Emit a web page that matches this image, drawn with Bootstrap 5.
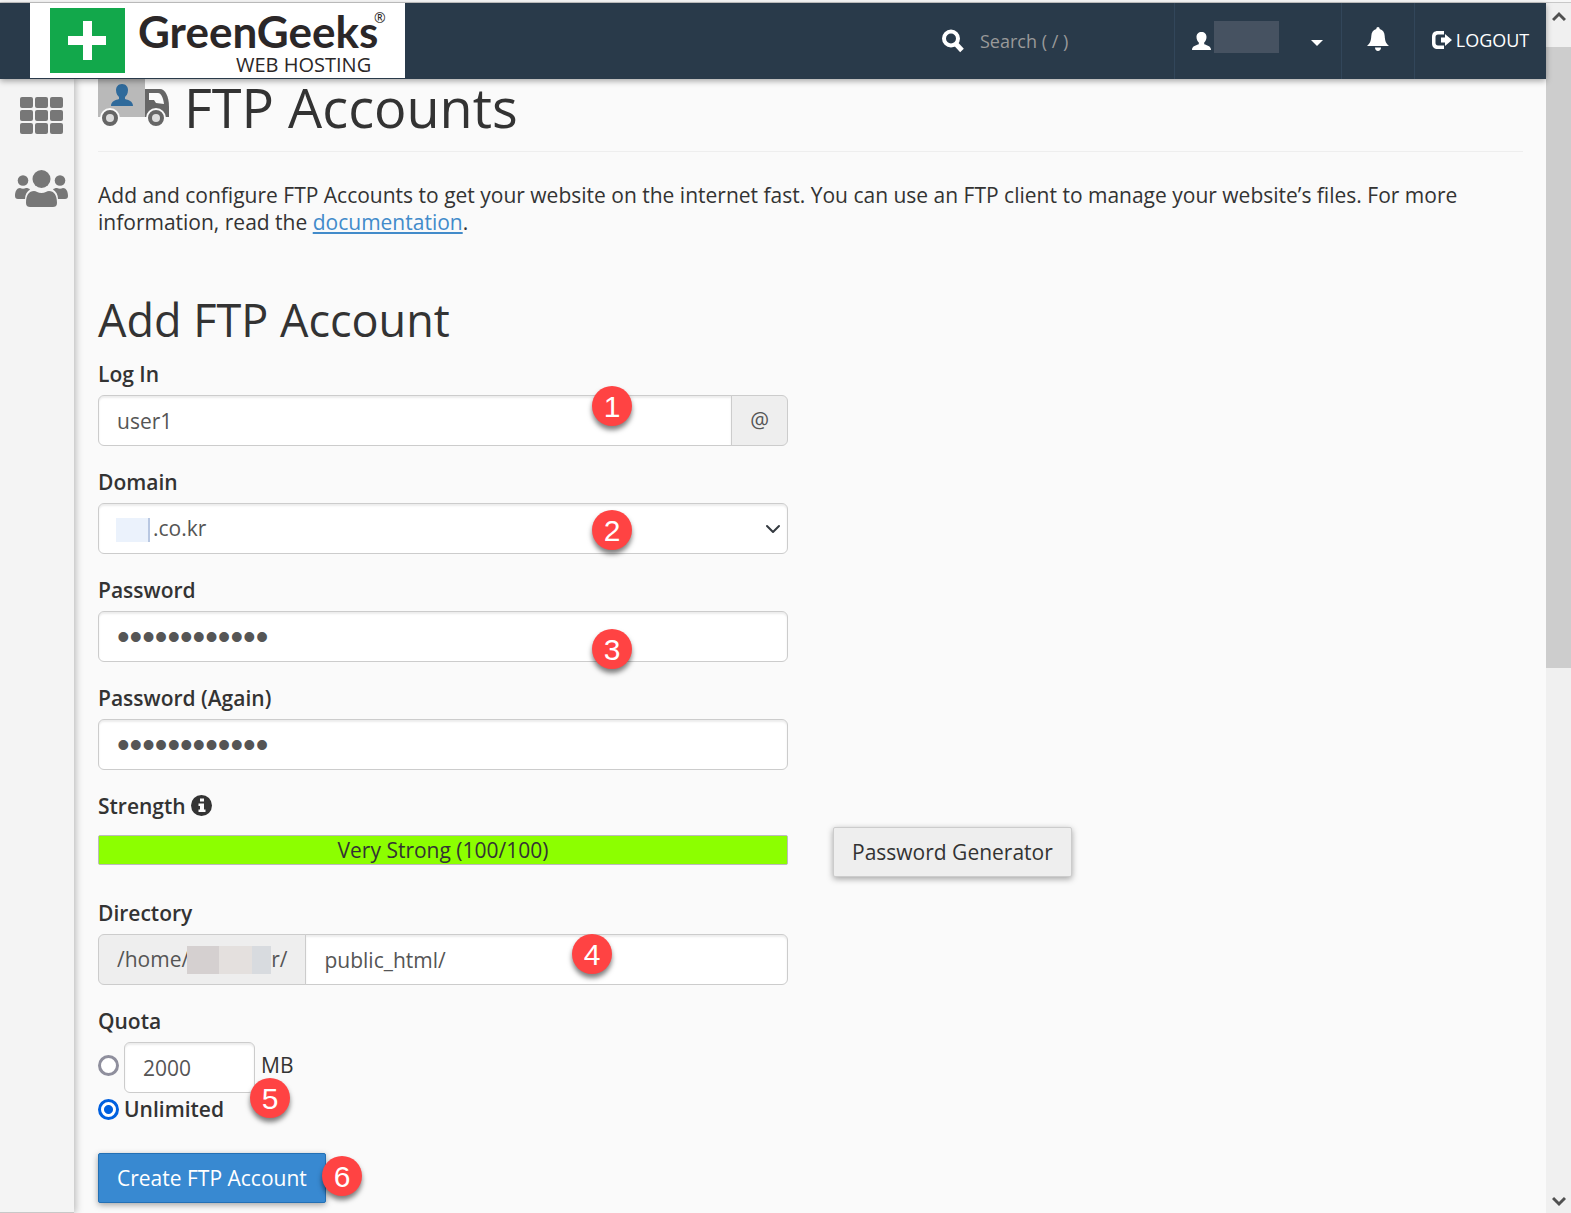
<!DOCTYPE html>
<html lang="en">
<head>
<meta charset="utf-8">
<meta name="viewport" content="width=device-width, initial-scale=1">
<title>FTP Accounts</title>
<link href="https://cdn.jsdelivr.net/npm/bootstrap@5.3.0/dist/css/bootstrap.min.css" rel="stylesheet">
<style>
body { font-family: "Open Sans", "Noto Sans", sans-serif; font-size: 21px; line-height: 27px; color: #333; background: #fafafa; }
.topline { height: 3px; border-bottom: 1px solid #c8c8c8; background: #f7f7f7; }
.app-bar { height: 76px; padding: 0; background: #293a4a; color: #fff; box-shadow: 0 2px 6px rgba(0,0,0,.35); z-index: 5; flex-wrap: nowrap; }
.app-logo { width: 375px; height: 75px; margin-left: 30px; background: #fff; align-self: flex-start; color: #2b2728; }
.app-logo svg { display: block; }
.bar-search { width: 232px; }
.bar-search input { font-size: 18px; line-height: 26px; width: 150px; background: none; border: 0; padding: 0; color: #fff; }
.bar-search input::placeholder { color: #999; opacity: 1; }
.bar-item { height: 76px; border: 0; border-left: 1px solid #32465a; background: none; color: #fff; text-decoration: none; padding: 0; }
.bar-user { width: 167px; padding-left: 17px; }
.bar-bell { width: 73px; }
.bar-out { width: 132px; gap: 4px; font-size: 18px; padding-bottom: 2px; }
.user-mask { width: 65px; height: 32px; background: #465261; margin: 0 32px 8px 3px; }
.side-nav { width: 74px; background: #f4f4f4; box-shadow: 2px 0 7px rgba(0,0,0,.25); border-bottom: 1px solid #c8c8c8; padding-top: 18px; gap: 35px; color: #777; z-index: 1; }
.side-nav a { color: inherit; }
.side-nav svg { display: block; }
.page-main { padding: 0 23px 8px 24px; }
.page-title { font-size: 54px; line-height: 56px; font-weight: 400; padding-bottom: 16px; margin: 0 0 30px; border-bottom: 1px solid #eee; gap: 14px; }
.intro { margin: 0 0 58px; }
.intro a { color: #428bca; }
.form-title { font-size: 45px; line-height: 52px; font-weight: 400; margin: 0 0 15px; }
.form-cols { --bs-gutter-x: 45px; }
.field { position: relative; margin-bottom: 23px; }
.field-label { display: block; font-weight: 600; line-height: 26px; height: 26px; margin-bottom: 8px; }
.field-label svg { vertical-align: -2px; }
.form-control, .form-select, .input-group-text { font-size: 21px; line-height: 29px; padding: 10px 18px; color: #555; border-color: #ccc; border-radius: 6px; }
.form-control, .form-select { background-color: #fff; box-shadow: inset 0 2px 2px rgba(0,0,0,.075); height: 51px; }
.input-group-text { background: #eee; }
.form-select { padding-left: 54px; background-size: 16px 16px; background-position: right 6px center; }
.pw { font-family: "Liberation Sans", sans-serif; font-size: 36px; }
.select-mask { position: absolute; left: 18px; top: 49px; width: 34px; height: 24px; background: #ebf2fc; border-right: 2px solid #b9c8e2; }
.dir-mask { width: 84px; height: 28px; margin-left: -2px; background: linear-gradient(90deg, #d5d0d0 0 32px, #e4e0de 32px 65px, #d8dbdf 65px); }
.strength-row { padding-top: 8px; }
.strength-bar { height: 30px; border: 1px solid #bbb; border-radius: 2px; background: #8cff00; margin-top: 8px; font-size: 21px; }
.strength-bar .progress-bar { background: #8cff00; color: #333; line-height: 28px; }
.btn-plain, .btn-create { font-size: 21px; line-height: 28px; padding: 10px 18px; border-radius: 2px; box-shadow: 0 2px 6px rgba(0,0,0,.35); }
.btn-plain { color: #333; background: #eee; border-color: #ccc; }
.btn-create { color: #fff; background: #3889d1; border-color: #2370b5; }
.step { position: absolute; width: 40px; height: 40px; border-radius: 50%; background: #ff4343; color: #fff; font: 30px/41px "Liberation Sans", Arial, sans-serif; text-align: center; box-shadow: 0 4px 5px rgba(0,0,0,.5); z-index: 6; }
.step-1 { left: 494px; top: 25px; }
.step-2 { left: 494px; top: 41px; }
.step-3 { left: 494px; top: 52px; }
.step-4 { left: 474px; top: 34px; }
.step-5 { left: 152px; top: 70px; }
.step-6 { left: 224px; top: 10px; }
.quota-radio { appearance: none; width: 21px; height: 21px; margin: 0 5px 0 0; border: 3px solid #8f8f9d; border-radius: 50%; background: #fff; }
.quota-radio:checked { border-color: #0060df; background: radial-gradient(circle, #0060df 0 4px, #fff 5px); }
.quota-size { width: 131px; margin-right: 6px; }
.quota-size-row > .quota-radio, .quota-size-row > label { margin-bottom: 4px; }
.quota-all-row { padding-top: 3px; }
.submit-row { padding-top: 7px; }
.scroll-rail { width: 25px; background: #f0f0f0; color: #505050; }
.scroll-end { height: 44px; }
.scroll-foot { height: 25px; }
.scroll-thumb { flex: 62 1 0; background: #cdcdcd; }
.scroll-rest { flex: 52 1 0; }
</style>
<script src="https://cdn.jsdelivr.net/npm/bootstrap@5.3.0/dist/js/bootstrap.bundle.min.js"></script>
</head>
<body>
<div class="min-vh-100 d-flex flex-column">
<div class="topline"></div>
<div class="d-flex flex-grow-1">
  <div class="flex-grow-1 d-flex flex-column">
    <header class="navbar app-bar">
      <a class="app-logo" href="#" aria-label="GreenGeeks Web Hosting">
        <svg width="375" height="75" viewBox="0 0 375 75">
          <rect x="20" y="5" width="75" height="65" fill="#12a84b"/>
          <path d="M53 18h9v15h14v9H62v15h-9V42H38v-9h15z" fill="#fff"/>
          <g fill="#2b2728">
          <text x="108" y="45" font-family="Lato, sans-serif" font-weight="700" font-size="44">GreenGeeks</text>
          <text x="344" y="20" font-family="Open Sans, sans-serif" font-size="14">®</text>
          <text x="206" y="69" font-family="Open Sans, sans-serif" font-size="20">WEB HOSTING</text>
          </g>
        </svg>
      </a>
      <div class="d-flex align-items-center">
        <div class="bar-search d-flex align-items-center">
          <svg width="22" height="24" viewBox="0 0 22 24" class="me-3" fill="none" stroke="#fff"><circle cx="9" cy="9.500" r="7" stroke-width="4"/><path d="M14 15l6 6.500" stroke-width="5"/></svg>
          <input type="text" placeholder="Search ( / )" aria-label="Search">
        </div>
        <button class="bar-item bar-user d-flex align-items-center" type="button" aria-label="User menu">
          <svg width="19" height="18" viewBox="0 0 19 18" fill="#fff"><path d="M9.500 0C12.500 0 14.500 2 14.500 5c0 2.500-1 4.500-2.300 5.600v1.600c2.300 1 6.800 1.500 6.800 5.800H0c0-4.300 4.500-4.800 6.800-5.800v-1.600C5.500 9.500 4.500 7.500 4.500 5c0-3 2-5 5-5z"/></svg>
          <span class="user-mask"></span>
          <svg width="12" height="6" viewBox="0 0 12 6" fill="#fff" class="mt-1"><path d="M0 0h12L6 6z"/></svg>
        </button>
        <button class="bar-item bar-bell d-flex align-items-center justify-content-center" type="button" aria-label="Notifications">
          <svg width="22" height="24" viewBox="0 0 22 24" fill="#fff" class="mb-1"><path d="M11 0c1 0 1.700.8 1.700 2C16 3 17.500 5.500 17.700 9c.3 5 1.200 7.500 4.300 10H0c3-2.500 4-5 4.300-10C4.500 5.500 6 3 9.300 2 9.300.8 10 0 11 0zM8 20.500h6c0 2-1.300 3.500-3 3.500s-3-1.500-3-3.500z"/></svg>
        </button>
        <a class="bar-item bar-out d-flex align-items-center justify-content-center" href="#">
          <svg width="20" height="18" viewBox="0 0 20 18" fill="#fff"><path d="M12 0v3.500H6C4.500 3.500 3.500 4.500 3.500 6v6c0 1.500 1 2.500 2.500 2.500h6V18H6c-4 0-6-2-6-6V6c0-4 2-6 6-6zM13 3l7 6-7 6v-3.500H9v-5h4z"/></svg>
          <span>LOGOUT</span>
        </a>
      </div>
    </header>
    <div class="d-flex flex-grow-1">
      <nav class="side-nav d-flex flex-column align-items-center flex-shrink-0 ps-2" aria-label="Main">
        <a href="#" aria-label="Tools"><svg width="43" height="38" viewBox="0 0 43 38" fill="currentColor"><g id="r"><rect width="13" height="11" rx="2"/><rect x="15" width="13" height="11" rx="2"/><rect x="30" width="13" height="11" rx="2"/></g><use href="#r" y="13"/><use href="#r" y="26"/></svg></a>
        <a href="#" aria-label="User manager"><svg width="53" height="38" viewBox="0 0 53 38" fill="currentColor"><circle cx="26.500" cy="9" r="9"/><circle cx="8" cy="10.500" r="5.300"/><circle cx="45" cy="10.500" r="5.300"/><path d="M11 33c0-8 3-12 8-12 2 0 4 2 7.500 2s5.500-2 7.500-2c5 0 8 4 8 12 0 3-2 4-4 4H15c-2 0-4-1-4-4zM5 18c2 1 4 1 6 0 2 0 3 .5 4 1.500-3 2-5 5-5 9.500H3c-2 0-3-1-3-3 0-5 2-8 5-8zM48 18c-2 1-4 1-6 0-2 0-3 .5-4 1.500 3 2 5 5 5 9.500h7c2 0 3-1 3-3 0-5-2-8-5-8z"/></svg></a>
      </nav>
      <main class="page-main flex-grow-1">
        <h1 class="page-title d-flex align-items-start">
          <svg width="72" height="48" viewBox="0 0 72 48" aria-hidden="true"><path d="M0 0h47v38H0z" fill="#b9b9b9"/><path d="M47 10h15c5 0 9 7 9 18v10H47z" fill="#666"/><path d="M51 14h9c3 0 5 4 6 11l-8-1-2-3h-5z" fill="#fafafa"/><g fill="#666" stroke="#fafafa" stroke-width="2"><circle cx="12" cy="39" r="9"/><circle cx="58" cy="39" r="9"/></g><circle cx="12" cy="39" r="4" fill="#ddd"/><circle cx="58" cy="39" r="4" fill="#ddd"/><path d="M24 5c4 0 6 3 6 6 0 4-2 6-3 7v2c3 1 8 2 8 7H13c0-5 5-6 8-7v-2c-1-1-3-3-3-7 0-3 2-6 6-6z" fill="#2f6a9b"/></svg>
          <span>FTP Accounts</span>
        </h1>
        <p class="intro">Add and configure FTP Accounts to get your website on the internet fast. You can use an FTP client to manage your website’s files. For more information, read the <a href="#">documentation</a>.</p>
        <form>
          <h2 class="form-title">Add FTP Account</h2>
          <div class="row form-cols">
            <div class="col-6">
              <div class="field">
                <label class="field-label" for="login">Log In</label>
                <div class="input-group"><input class="form-control" id="login" type="text" value="user1"><span class="input-group-text">@</span></div>
                <span class="step step-1">1</span>
              </div>
              <div class="field">
                <label class="field-label" for="domain">Domain</label>
                <select class="form-select" id="domain"><option>.co.kr</option></select>
                <span class="select-mask"></span>
                <span class="step step-2">2</span>
              </div>
              <div class="field">
                <label class="field-label" for="pw1">Password</label>
                <input class="form-control pw" id="pw1" type="password" value="abcdefghijkl">
                <span class="step step-3">3</span>
              </div>
              <div class="field">
                <label class="field-label" for="pw2">Password (Again)</label>
                <input class="form-control pw" id="pw2" type="password" value="abcdefghijkl">
              </div>
            </div>
          </div>
          <div class="field-label mb-0">Strength <svg width="21" height="21" viewBox="0 0 21 21" aria-label="Help"><circle cx="10.500" cy="10.500" r="10.500" fill="#333"/><path d="M9 3.500h4v3H9zM7.500 8.500H13v6h1.500V17h-7v-2.500H9v-3.500H7.500z" fill="#fafafa"/></svg></div>
          <div class="row form-cols field strength-row">
            <div class="col-6"><div class="progress strength-bar" role="progressbar" aria-label="Strength" aria-valuenow="100" aria-valuemin="0" aria-valuemax="100"><div class="progress-bar" style="width:100%">Very Strong (100/100)</div></div></div>
            <div class="col-6"><button class="btn btn-plain" type="button">Password Generator</button></div>
          </div>
          <div class="row form-cols">
            <div class="col-6">
              <div class="field">
                <label class="field-label" for="dir">Directory</label>
                <div class="input-group"><span class="input-group-text">/home/<span class="dir-mask"></span>r/</span><input class="form-control" id="dir" type="text" value="public_html/"></div>
                <span class="step step-4">4</span>
              </div>
              <div class="field">
                <div class="field-label">Quota</div>
                <div class="d-flex align-items-center quota-size-row">
                  <input class="quota-radio" type="radio" name="quota" aria-label="Limited quota">
                  <input class="form-control quota-size" id="quota-size" type="text" value="2000"><label for="quota-size">MB</label>
                </div>
                <div class="d-flex align-items-center quota-all-row">
                  <input class="quota-radio" type="radio" name="quota" id="unlimited" checked>
                  <label class="fw-semibold" for="unlimited">Unlimited</label>
                </div>
                <span class="step step-5">5</span>
              </div>
              <div class="position-relative submit-row">
                <button class="btn btn-create" type="button">Create FTP Account</button>
                <span class="step step-6">6</span>
              </div>
            </div>
          </div>
        </form>
      </main>
    </div>
  </div>
  <div class="scroll-rail d-flex flex-column flex-shrink-0" aria-hidden="true">
    <div class="scroll-end d-flex justify-content-center pt-2"><svg width="14" height="12" viewBox="0 0 14 12" fill="none" stroke="currentColor" stroke-width="3"><path d="M1 9l6-6 6 6"/></svg></div>
    <div class="scroll-thumb"></div>
    <div class="scroll-rest"></div>
    <div class="scroll-foot d-flex justify-content-center pt-2"><svg width="14" height="12" viewBox="0 0 14 12" fill="none" stroke="currentColor" stroke-width="3"><path d="M1 2l6 6 6-6"/></svg></div>
  </div>
</div>
</div>
</body>
</html>
